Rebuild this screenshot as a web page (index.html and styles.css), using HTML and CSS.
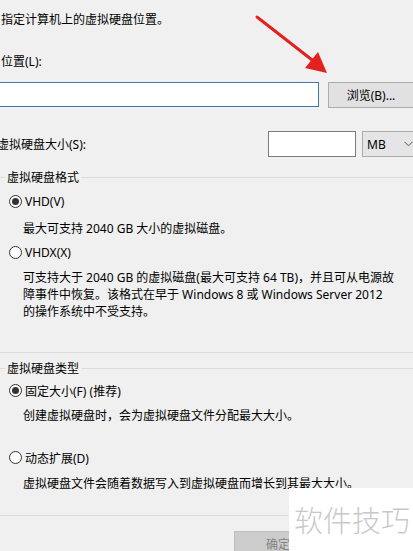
FILE: index.html
```html
<!DOCTYPE html>
<html lang="zh-CN">
<head>
<meta charset="utf-8">
<title>虚拟硬盘位置</title>
<link rel="stylesheet" href="styles.css">
</head>
<body>
<div class="page">
  <p class="line intro">指定计算机上的虚拟硬盘位置。</p>
  <p class="line loc-label">位置(L):</p>
  <div class="loc-row">
    <div class="textbox path"></div>
    <div class="btn browse">浏览(B)...</div>
  </div>
  <div class="size-row">
    <span class="line size-label">虚拟硬盘大小(S):</span>
    <div class="textbox size"></div>
    <div class="combo"><span>MB</span>
      <svg class="chev" width="9" height="6" viewBox="0 0 9 6"><path d="M0.5 0.8 L4.5 4.8 L8.5 0.8" fill="none" stroke="#555" stroke-width="1"/></svg>
    </div>
  </div>

  <section class="group g1">
    <div class="group-head"><span class="seg"></span><span class="group-title">虚拟硬盘格式</span><span class="rule"></span></div>
    <div class="radio r1"><span class="dot checked"></span><span>VHD(V)</span></div>
    <p class="line desc d1">最大可支持 2040 GB 大小的虚拟磁盘。</p>
    <div class="radio r2"><span class="dot"></span><span>VHDX(X)</span></div>
    <p class="line desc d2">可支持大于 2040 GB 的虚拟磁盘(最大可支持 64 TB)，并且可从电源故<br>障事件中恢复。该格式在早于 Windows 8 或 Windows Server 2012<br>的操作系统中不受支持。</p>
  </section>

  <section class="group g2">
    <div class="group-head"><span class="seg"></span><span class="group-title">虚拟硬盘类型</span><span class="rule"></span></div>
    <div class="radio r3"><span class="dot checked"></span><span>固定大小(F) (推荐)</span></div>
    <p class="line desc d3">创建虚拟硬盘时，会为虚拟硬盘文件分配最大大小。</p>
    <div class="radio r4"><span class="dot"></span><span>动态扩展(D)</span></div>
    <p class="line desc d4">虚拟硬盘文件会随着数据写入到虚拟硬盘而增长到其最大大小。</p>
  </section>

  <div class="footer">
    <div class="btn ok">确定</div>
  </div>
</div>

<svg class="arrow" width="413" height="100" viewBox="0 0 413 100">
  <line x1="257" y1="17" x2="316" y2="63" stroke="#e3221f" stroke-width="3" stroke-linecap="round"/>
  <polygon points="327,73 305,68 318,52" fill="#e3221f"/>
</svg>

<div class="watermark">软件技巧</div>
</body>
</html>
```

FILE: styles.css
```css
html, body {
  margin: 0;
  padding: 0;
}
body {
  width: 413px;
  height: 551px;
  overflow: hidden;
  background: #f0f0f0;
  font-family: "Noto Sans", "Noto Sans CJK SC", sans-serif;
  font-size: 12px;
  color: #000;
  position: relative;
}
.page {
  padding-left: 1px;
}
.line {
  margin: 0;
  line-height: 17px;
  white-space: nowrap;
}
.intro {
  padding-top: 11px;
}
.loc-label {
  margin-top: 25px;
}
.loc-row {
  display: flex;
  margin-top: 12px;
  margin-left: -4px;
  height: 26px;
}
.loc-row > *,
.size-row > * {
  flex: none;
}
.textbox {
  box-sizing: border-box;
  background: #fff;
}
.path {
  width: 322px;
  height: 25px;
  border: 1px solid #3d7ab3;
}
.btn {
  box-sizing: border-box;
  display: flex;
  align-items: center;
  justify-content: center;
  background: #e1e1e1;
  border: 1px solid #adadad;
}
.browse {
  margin-left: 9px;
  width: 86px;
  height: 26px;
}
.size-row {
  display: flex;
  align-items: center;
  margin-top: 23px;
  margin-left: -4px;
  height: 26px;
}
.size-label {
  width: 271px;
}
.size {
  width: 88px;
  height: 26px;
  border: 1px solid #7a7a7a;
}
.combo {
  box-sizing: border-box;
  margin-left: 6px;
  width: 56px;
  height: 26px;
  background: #e5e5e5;
  border: 1px solid #adadad;
  display: flex;
  align-items: center;
  padding-left: 4px;
}
.combo .chev {
  margin-left: 18px;
}
.group {
  border-bottom: 1px solid #dcdcdc;
  margin-left: -1px;
}
.g1 {
  margin-top: 12px;
  padding-bottom: 32px;
}
.g2 {
  margin-top: 7px;
  padding-bottom: 23px;
}
.group-head {
  display: flex;
  align-items: center;
  height: 17px;
}
.seg {
  width: 5px;
  height: 1px;
  background: #dcdcdc;
}
.group-title {
  line-height: 17px;
  padding: 0 2px 0 2px;
  white-space: nowrap;
}
.rule {
  flex: 1;
  height: 1px;
  background: #dcdcdc;
  margin-top: -1px;
}
.radio {
  display: flex;
  align-items: center;
  height: 17px;
  padding-left: 9px;
  white-space: nowrap;
}
.dot {
  box-sizing: border-box;
  width: 13px;
  height: 13px;
  border: 1px solid #333;
  border-radius: 50%;
  margin-right: 3px;
  background: #fff;
  position: relative;
}
.dot.checked::after {
  content: "";
  position: absolute;
  left: 2px;
  top: 2px;
  width: 7px;
  height: 7px;
  border-radius: 50%;
  background: #333;
}
.r1 { margin-top: 7px; }
.r2 { margin-top: 7px; }
.r3 { margin-top: 5px; }
.r4 { margin-top: 25px; }
.desc {
  padding-left: 23px;
}
.d1 { margin-top: 10px; }
.d2 { margin-top: 8px; }
.d3 { margin-top: 8px; }
.d4 { margin-top: 9px; }
.footer {
  display: flex;
  padding-left: 233px;
  margin-top: 15px;
}
.ok {
  width: 88px;
  height: 26px;
  background: #cccccc;
  border-color: #bfbfbf;
  color: #838383;
}
.arrow {
  position: absolute;
  left: 0;
  top: 0;
  pointer-events: none;
}
.watermark {
  position: absolute;
  right: 0;
  bottom: 0;
  width: 124px;
  height: 63px;
  background: #fff;
  color: #c9c9c9;
  font-family: "Noto Sans CJK SC", sans-serif;
  font-weight: 300;
  font-size: 29px;
  line-height: 63px;
  text-indent: 5px;
  white-space: nowrap;
  box-sizing: border-box;
  padding-bottom: 4px;
  display: flex;
  align-items: flex-start;
}
```
